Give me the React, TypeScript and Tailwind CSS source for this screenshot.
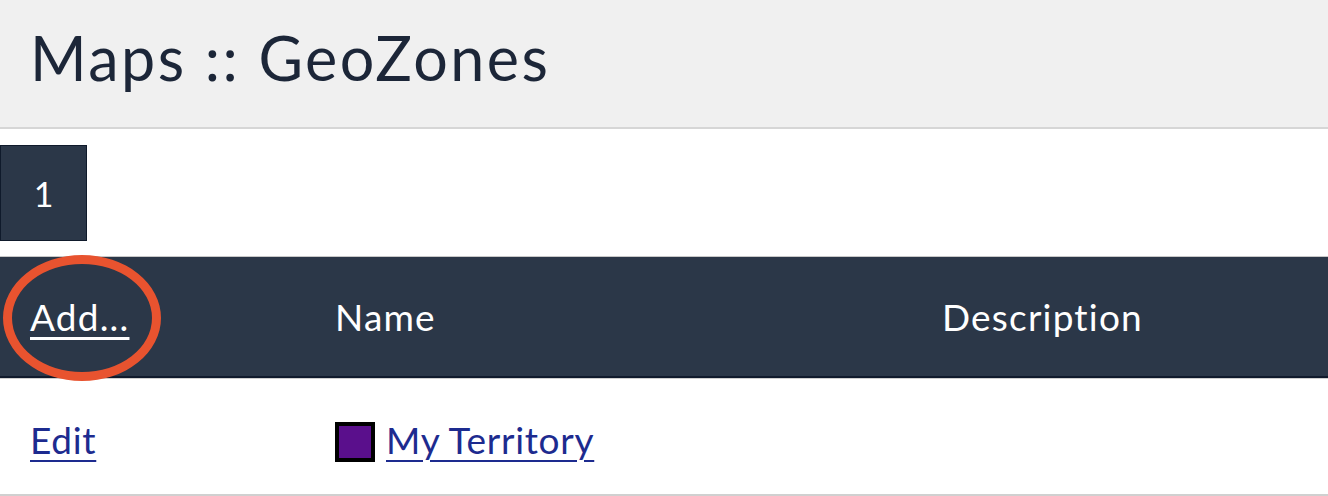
import React from "react";

export default function App() {
  return (
    <div className="relative w-[1328px] h-[496px] bg-white overflow-hidden" style={{ fontFamily: "Lato, 'Open Sans', sans-serif" }}>
      <div className="h-[129px] bg-[#f0f0f0] border-b-2 border-[#d6d6d6] flex items-center pl-[30px]">
        <h1 className="text-[61px] leading-none text-[#1c2638] font-normal tracking-[2.5px] -mt-[12px]">Maps :: GeoZones</h1>
      </div>
      <div className="pt-[16px] h-[127px]">
        <div className="w-[87px] h-[96px] bg-[#2b3748] border border-[#0f1a2b] flex items-center justify-center text-white text-[34px]">1</div>
      </div>
      <div className="h-[122px] bg-[#2b3748] border-t border-t-[#c8c8c8] border-b-2 border-b-[#101a2c] flex items-center text-white text-[37px] tracking-[1.2px]">
        <div className="w-[335px] pl-[30px]"><span className="underline decoration-[3px] underline-offset-[6px]">Add...</span></div>
        <div className="w-[607px]">Name</div>
        <div>Description</div>
      </div>
      <div className="h-[1px] bg-[#cfcfcf]" />
      <div className="h-[118px] flex items-center text-[37px] tracking-[0.7px] text-[#1d2b8f] border-b-[3px] border-[#d0d0d0]">
        <div className="w-[335px] pl-[30px] mt-[6px]"><span className="underline decoration-2 underline-offset-[6px]">Edit</span></div>
        <div className="flex items-center gap-[11px] mt-[6px]">
          <span className="w-[40px] h-[40px] border-[4px] border-black bg-[#5a0f8c] inline-block mt-[4px]" />
          <span className="underline decoration-2 underline-offset-[6px]">My Territory</span>
        </div>
      </div>
      <div className="absolute left-[3px] top-[255px] w-[158px] h-[126px] rounded-[50%] border-[9px] border-[#e8532f]" />
    </div>
  );
}
